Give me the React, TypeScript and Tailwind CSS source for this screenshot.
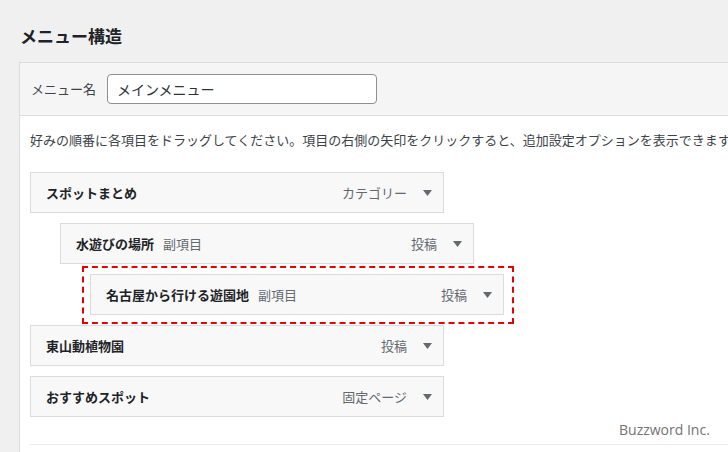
import React from "react";

const jp = { fontFamily: '"Noto Sans CJK JP", "Noto Sans", sans-serif' };

function Arrow() {
  return (
    <svg width="9" height="6" viewBox="0 0 9 6" className="ml-[16px] shrink-0">
      <polygon points="0,0 9,0 4.5,6" fill="#646970" />
    </svg>
  );
}

function Item({
  title,
  sub,
  type,
  indent,
  highlight,
}: {
  title: string;
  sub?: string;
  type: string;
  indent: string;
  highlight?: boolean;
}) {
  return (
    <div className={`relative self-start ${indent}`}>
      <div className="w-[414px] h-[41px] border border-[#dcdcde] bg-[#f8f8f8] flex items-center pl-[15px] pr-[11px]">
        <span className="text-[13px] font-bold text-[#1d2327]">{title}</span>
        {sub && <span className="ml-[9px] text-[13px] text-[#646970]">{sub}</span>}
        <span className="ml-auto text-[13px] text-[#646970]">{type}</span>
        <Arrow />
      </div>
      {highlight && (
        <div className="absolute -left-[8px] -top-[8px] -right-[10px] -bottom-[9px] border-2 border-dashed border-[#e60000] pointer-events-none" />
      )}
    </div>
  );
}

export default function App() {
  return (
    <div className="relative w-[728px] h-[452px] overflow-hidden bg-[#f0f0f1]" style={jp}>
      <h2 className="pl-[20px] pt-[24px] h-[48px] leading-[24px] text-[17px] font-bold text-[#1d2327]">
        メニュー構造
      </h2>
      <div className="ml-[19px] mt-[14px] w-[760px] border border-[#dcdcde] bg-white h-[500px]">
        <div className="h-[53px] bg-[#f5f5f5] border-b border-[#dcdcde] flex items-center pl-[11px]">
          <span className="w-[76px] text-[13px] text-[#3c434a]">メニュー名</span>
          <div className="w-[270px] h-[30px] rounded-[4px] border border-[#8c8f94] bg-white flex items-center pl-[9px] text-[14px] text-[#2c3338]">
            メインメニュー
          </div>
        </div>
        <div className="pl-[10px]">
          <p className="pt-[14px] leading-[20px] text-[13px] text-[#3c434a] whitespace-nowrap">
            好みの順番に各項目をドラッグしてください。項目の右側の矢印をクリックすると、追加設定オプションを表示できます。
          </p>
          <div className="mt-[22px] flex flex-col gap-[10px]">
            <Item title="スポットまとめ" type="カテゴリー" indent="ml-0" />
            <Item title="水遊びの場所" sub="副項目" type="投稿" indent="ml-[30px]" />
            <Item title="名古屋から行ける遊園地" sub="副項目" type="投稿" indent="ml-[60px]" highlight />
            <Item title="東山動植物園" type="投稿" indent="ml-0" />
            <Item title="おすすめスポット" type="固定ページ" indent="ml-0" />
          </div>
          <div className="mt-[27px] border-t border-[#ebebeb]" />
        </div>
      </div>
      <div
        className="absolute left-[619px] top-[419px] text-[14px] text-[#737373]"
        style={{ fontFamily: '"Open Sans", "Noto Sans", sans-serif' }}
      >
        Buzzword Inc.
      </div>
    </div>
  );
}
